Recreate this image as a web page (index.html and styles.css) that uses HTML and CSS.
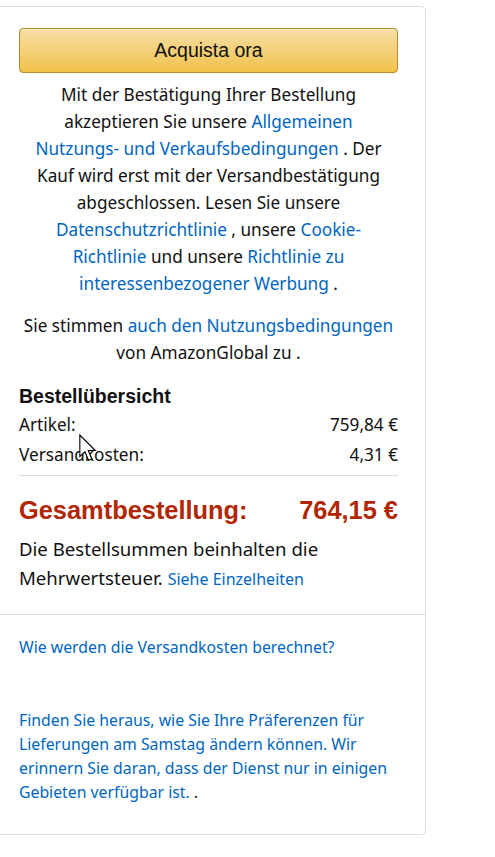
FILE: index.html
```html
<!DOCTYPE html>
<html lang="de">
<head>
<meta charset="utf-8">
<title>Bestellung</title>
<link rel="stylesheet" href="styles.css">
</head>
<body>
<div class="panel">
  <div class="top">
    <button class="buy" type="button">Acquista ora</button>
    <p class="legal">Mit der Bestätigung Ihrer Bestellung akzeptieren Sie unsere <a href="#">Allgemeinen Nutzungs- und Verkaufsbedingungen</a> . Der Kauf wird erst mit der Versandbestätigung abgeschlossen. Lesen Sie unsere <a href="#">Datenschutzrichtlinie</a> , unsere <a href="#">Cookie-Richtlinie</a> und unsere <a href="#">Richtlinie zu interessenbezogener Werbung</a> .</p>
    <p class="legal agree">Sie stimmen <a href="#">auch den Nutzungsbedingungen</a> von AmazonGlobal zu .</p>
    <h3 class="heading">Bestellübersicht</h3>
    <div class="row"><span>Artikel:</span><span>759,84 €</span></div>
    <div class="row"><span>Versandkosten:</span><span>4,31 €</span></div>
    <div class="divider"></div>
    <div class="row total"><span>Gesamtbestellung:</span><span>764,15 €</span></div>
    <p class="vat">Die Bestellsummen beinhalten die Mehrwertsteuer. <a href="#" class="small">Siehe Einzelheiten</a></p>
  </div>
  <div class="bottom">
    <a href="#" class="info">Wie werden die Versandkosten berechnet?</a>
    <p class="info saturday"><a href="#">Finden Sie heraus, wie Sie Ihre Präferenzen für Lieferungen am Samstag ändern können. Wir erinnern Sie daran, dass der Dienst nur in einigen Gebieten verfügbar ist.</a> .</p>
  </div>
  <svg class="cursor" width="18" height="28" viewBox="0 0 13 20" aria-hidden="true">
    <path d="M0.6 0.6 L0.6 16.2 L4.3 12.7 L6.9 18.9 L9.3 17.9 L6.7 11.8 L11.8 11.8 Z" fill="#fff" stroke="#000" stroke-width="0.8" stroke-linejoin="miter"/>
  </svg>
</div>
</body>
</html>
```
FILE: styles.css
```css
html, body {
  margin: 0;
  padding: 0;
  background: #fff;
}
body {
  font-family: "Noto Sans", "Open Sans", sans-serif;
  color: #0f1111;
}
a {
  color: #0066c0;
  text-decoration: none;
}
.panel {
  position: relative;
  box-sizing: border-box;
  width: 435px;
  margin: 6px 0 0 -9px;
  border: 1px solid #dddddd;
  border-radius: 5px;
}
.top {
  padding: 21px 27px 20px 27px;
}
.buy {
  display: block;
  box-sizing: border-box;
  width: 100%;
  height: 45px;
  margin: 0;
  border: 1px solid #b58a2e;
  border-radius: 4px;
  background: linear-gradient(to bottom, #f7dfa5, #f0c14b);
  box-shadow: inset 0 1px 0 rgba(255, 255, 255, 0.4);
  font-family: "Liberation Sans", Arial, sans-serif;
  font-size: 19.5px;
  color: #111;
  cursor: pointer;
}
.legal {
  margin: 8px 0 0 0;
  padding: 0 16px;
  text-align: center;
  font-size: 17.2px;
  line-height: 27px;
  color: #111;
}
.agree {
  margin-top: 15px;
  padding: 0;
}
.heading {
  margin: 16px 0 0 0;
  font-family: "Liberation Sans", Arial, sans-serif;
  font-size: 19.5px;
  line-height: 28px;
  font-weight: bold;
  color: #111;
}
.row {
  display: flex;
  justify-content: space-between;
  font-size: 17.2px;
  line-height: 30px;
  color: #111;
}
.divider {
  height: 1px;
  margin-top: 5px;
  background: #ddd;
}
.total {
  margin-top: 19px;
  font-family: "Liberation Sans", Arial, sans-serif;
  font-size: 25.4px;
  font-weight: bold;
  line-height: 30px;
  color: #b12704;
}
.vat {
  margin: 9px 0 0 0;
  font-size: 18.6px;
  line-height: 29px;
  color: #111;
}
.small {
  font-size: 16px;
}
.bottom {
  border-top: 1px solid #ddd;
  padding: 20px 27px 30px 27px;
}
.info {
  font-size: 15.8px;
  line-height: 24px;
}
.saturday {
  margin: 49px 0 0 0;
  color: #111;
}
.saturday a {
  color: #0066c0;
}
.cursor {
  position: absolute;
  left: 87px;
  top: 427px;
}
```
